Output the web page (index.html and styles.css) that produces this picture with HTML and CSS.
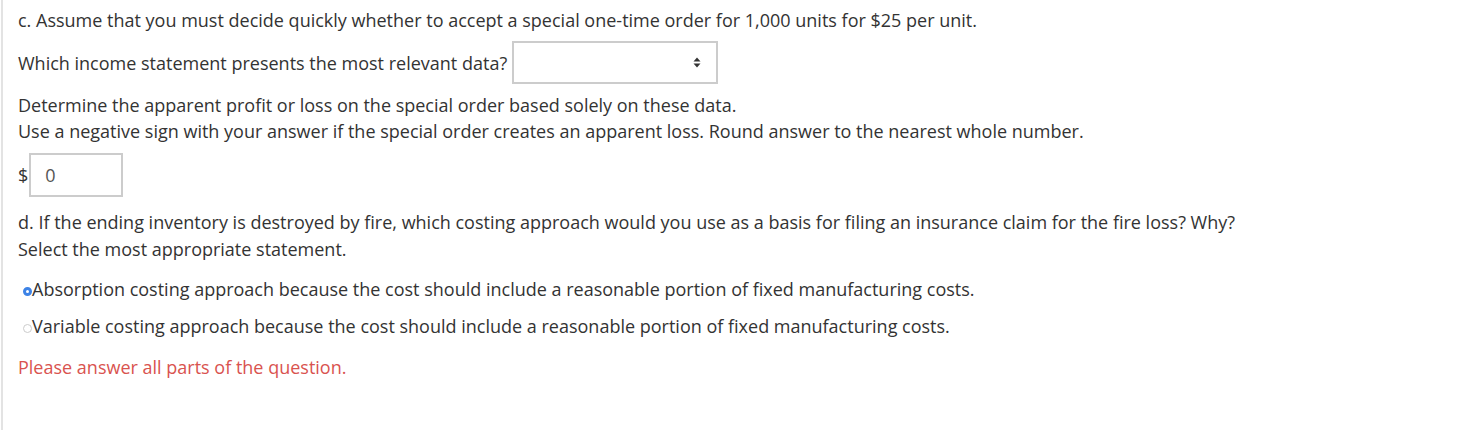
FILE: index.html
```html
<!DOCTYPE html>
<html lang="en">
<head>
  <meta charset="UTF-8">
  <meta name="viewport" content="width=device-width, initial-scale=1.0">
  <title>Special Order</title>
  <link rel="stylesheet" href="styles.css">
</head>
<body>
  <div class="question">
    <p class="line first">c. Assume that you must decide quickly whether to accept a special one-time order for 1,000 units for $25 per unit.</p>

    <div class="select-row">
      <span>Which income statement presents the most relevant data?</span>
      <div class="select-box">
        <span class="arrows">
          <svg width="8" height="11" viewBox="0 0 8 11"><path d="M4 0.5L7.5 4.5H0.5Z M4 10.5L7.5 6.5H0.5Z" fill="#333"/></svg>
        </span>
      </div>
    </div>

    <p class="block">Determine the apparent profit or loss on the special order based solely on these data.<br>
    Use a negative sign with your answer if the special order creates an apparent loss. Round answer to the nearest whole number.</p>

    <div class="amount-row">
      <span class="dollar">$</span>
      <div class="amount-box">0</div>
    </div>

    <p class="block part-d">d. If the ending inventory is destroyed by fire, which costing approach would you use as a basis for filing an insurance claim for the fire loss? Why?<br>
    Select the most appropriate statement.</p>

    <ul class="options">
      <li><span class="radio checked"></span>Absorption costing approach because the cost should include a reasonable portion of fixed manufacturing costs.</li>
      <li><span class="radio"></span>Variable costing approach because the cost should include a reasonable portion of fixed manufacturing costs.</li>
    </ul>

    <p class="error">Please answer all parts of the question.</p>
  </div>
</body>
</html>
```

FILE: styles.css
```css
html, body {
  margin: 0;
  height: 100%;
}
body {
  font-family: "Open Sans", Arial, sans-serif;
  font-size: 18px;
  color: #333;
  background: #fff;
}
.question {
  border-left: 2px solid #e3e3e3;
  margin-left: 1px;
  padding-left: 15px;
  height: 100%;
  box-sizing: border-box;
}
p {
  margin: 0;
  line-height: 26px;
}
.first {
  padding-top: 7px;
}
.select-row {
  display: flex;
  align-items: center;
  margin-top: 8px;
}
.select-box {
  height: 39px;
  border: 2px solid #ccc;
  margin-left: 5px;
  display: flex;
  align-items: center;
  justify-content: flex-end;
  padding-right: 15px;
  width: 187px;
}
.arrows {
  display: flex;
}
.block {
  margin-top: 8px;
}
.amount-row {
  display: flex;
  align-items: center;
  margin-top: 9px;
}
.dollar {
  margin-right: 1px;
}
.amount-box {
  width: 76px;
  height: 40px;
  border: 2px solid #ccc;
  line-height: 40px;
  padding-left: 14px;
  color: #555;
}
.part-d {
  margin-top: 12px;
  line-height: 27px;
}
.options {
  list-style: none;
  margin: 13px 0 0;
  padding: 0;
}
.options li {
  display: flex;
  align-items: center;
  line-height: 26px;
  margin-bottom: 11px;
  padding-left: 5px;
}
.radio {
  width: 9px;
  height: 9px;
  border-radius: 50%;
  border: 1px solid #ccc;
  box-sizing: border-box;
  margin-top: 4px;
}
.radio.checked {
  background: #fff;
  border: 3px solid #3e83e6;
}
.error {
  color: #d9534f;
  margin-top: 15px;
}
```
